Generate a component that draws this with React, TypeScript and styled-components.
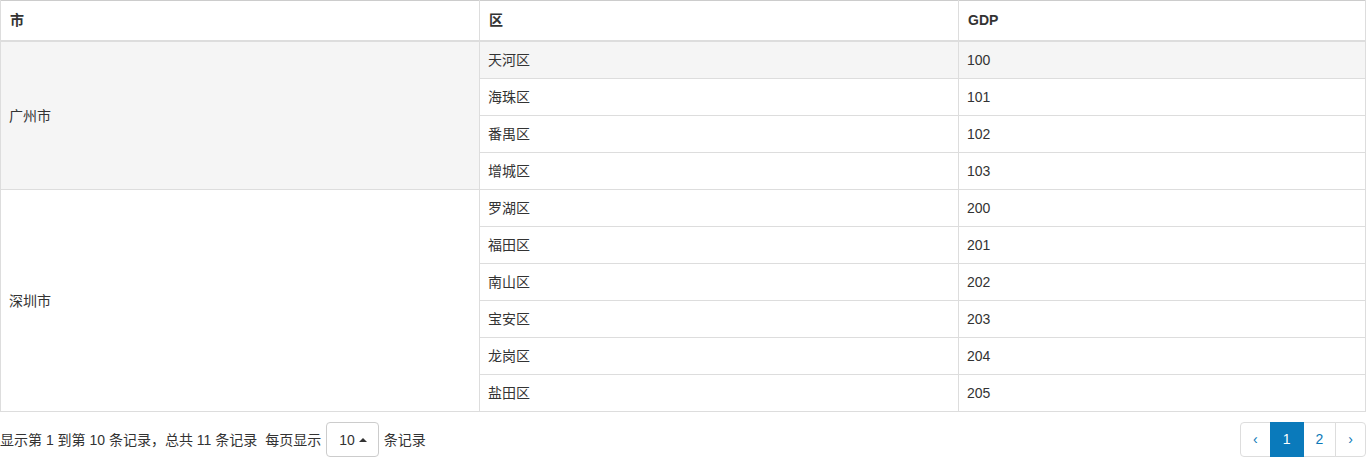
import React from "react";
import styled, { createGlobalStyle } from "styled-components";

const GlobalStyle = createGlobalStyle`
  html, body {
    margin: 0;
    padding: 0;
    background: #fff;
  }
  body {
    font-family: "Liberation Sans", "Noto Sans CJK SC", sans-serif;
    font-size: 14px;
    color: #333;
  }
`;

type Row = { city: string; district: string; gdp: number };

const rows: Row[] = [
  { city: "广州市", district: "天河区", gdp: 100 },
  { city: "广州市", district: "海珠区", gdp: 101 },
  { city: "广州市", district: "番禺区", gdp: 102 },
  { city: "广州市", district: "增城区", gdp: 103 },
  { city: "深圳市", district: "罗湖区", gdp: 200 },
  { city: "深圳市", district: "福田区", gdp: 201 },
  { city: "深圳市", district: "南山区", gdp: 202 },
  { city: "深圳市", district: "宝安区", gdp: 203 },
  { city: "深圳市", district: "龙岗区", gdp: 204 },
  { city: "深圳市", district: "盐田区", gdp: 205 },
];

const Table = styled.table`
  width: 100%;
  border-collapse: collapse;
  table-layout: fixed;
  border: 1px solid #ddd;
  border-top-color: #ccc;
`;

const Col = styled.col<{ $w?: number }>`
  width: ${(p) => (p.$w ? `${p.$w}px` : "auto")};
`;

const Th = styled.th`
  text-align: left;
  font-weight: bold;
  padding: 8px 9px;
  line-height: 23px;
  height: 23px;
  border-left: 1px solid #ddd;
  border-bottom: 2px solid #ddd;
  vertical-align: middle;
`;

const Tr = styled.tr<{ $hover?: boolean }>`
  background: ${(p) => (p.$hover ? "#f5f5f5" : "#fff")};
`;

const Td = styled.td`
  padding: 8px;
  line-height: 20px;
  border-top: 1px solid #ddd;
  border-left: 1px solid #ddd;
  vertical-align: middle;
`;

const CityTd = styled(Td)<{ $hover?: boolean }>`
  background: ${(p) => (p.$hover ? "#f5f5f5" : "#fff")};
`;

const Footer = styled.div`
  display: flex;
  align-items: center;
  justify-content: space-between;
  margin-top: 10px;
`;

const Info = styled.div`
  display: flex;
  align-items: center;
  line-height: 20px;
`;

const Label = styled.span`
  margin-left: 8px;
`;

const PageSize = styled.button`
  display: inline-flex;
  align-items: center;
  gap: 4px;
  height: 35px;
  margin: 0 5px 0 5px;
  padding: 0 11px 0 12px;
  border: 1px solid #ccc;
  border-radius: 4px;
  background: #fff;
  color: #333;
  font: inherit;
`;

const Caret = styled.span`
  width: 0;
  height: 0;
  border-left: 4px solid transparent;
  border-right: 4px solid transparent;
  border-bottom: 4px solid #333;
`;

const Pagination = styled.ul`
  display: flex;
  list-style: none;
  margin: 0;
  padding: 0;
`;

const PageLink = styled.li<{ $active?: boolean }>`
  height: 33px;
  line-height: 33px;
  padding: 0 12px;
  border: 1px solid #ddd;
  margin-left: -1px;
  color: ${(p) => (p.$active ? "#fff" : "#0a78b8")};
  background: ${(p) => (p.$active ? "#0a7abb" : "#fff")};
  border-color: ${(p) => (p.$active ? "#0a7abb" : "#ddd")};
  position: relative;
  z-index: ${(p) => (p.$active ? 1 : 0)};

  &:first-child {
    margin-left: 0;
    border-radius: 4px 0 0 4px;
  }
  &:last-child {
    border-radius: 0 4px 4px 0;
  }
`;

export default function App() {
  return (
    <>
      <GlobalStyle />
      <Table>
        <colgroup>
          <Col $w={479} />
          <Col $w={479} />
          <Col />
        </colgroup>
        <thead>
          <tr>
            <Th>市</Th>
            <Th>区</Th>
            <Th>GDP</Th>
          </tr>
        </thead>
        <tbody>
          {rows.map((r, i) => {
            const first = i === 0 || rows[i - 1].city !== r.city;
            const span = rows.filter((x) => x.city === r.city).length;
            return (
              <Tr key={r.district} $hover={i === 0}>
                {first && (
                  <CityTd rowSpan={span} $hover={i === 0}>
                    {r.city}
                  </CityTd>
                )}
                <Td>{r.district}</Td>
                <Td>{r.gdp}</Td>
              </Tr>
            );
          })}
        </tbody>
      </Table>
      <Footer>
        <Info>
          显示第 1 到第 10 条记录，总共 11 条记录
          <Label>每页显示</Label>
          <PageSize>
            10 <Caret />
          </PageSize>
          条记录
        </Info>
        <Pagination>
          <PageLink>‹</PageLink>
          <PageLink $active>1</PageLink>
          <PageLink>2</PageLink>
          <PageLink>›</PageLink>
        </Pagination>
      </Footer>
    </>
  );
}
